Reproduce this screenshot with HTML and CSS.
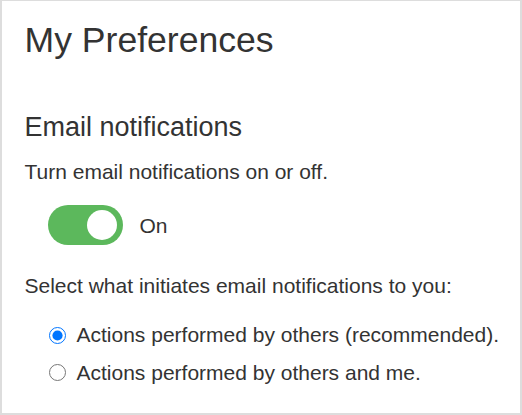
FILE: index.html
```html
<!DOCTYPE html>
<html lang="en">
<head>
<meta charset="utf-8">
<title>My Preferences</title>
<link rel="stylesheet" href="styles.css">
</head>
<body>
<div class="panel">
  <h1 class="title">My Preferences</h1>
  <h2 class="section-title">Email notifications</h2>
  <p class="text intro">Turn email notifications on or off.</p>
  <div class="toggle-row">
    <span class="toggle" role="switch" aria-checked="true"><span class="knob"></span></span>
    <span class="text toggle-label">On</span>
  </div>
  <p class="text prompt">Select what initiates email notifications to you:</p>
  <div class="options">
    <label class="option"><input class="radio" type="radio" name="init" checked><span class="text">Actions performed by others (recommended).</span></label>
    <label class="option"><input class="radio" type="radio" name="init"><span class="text">Actions performed by others and me.</span></label>
  </div>
</div>
</body>
</html>
```
FILE: styles.css
```css
html, body {
  margin: 0;
  padding: 0;
  background: #fff;
}
body {
  font-family: "Liberation Sans", Arial, sans-serif;
  color: #333;
}
.panel {
  box-sizing: border-box;
  width: 522px;
  height: 415px;
  border: 2px solid #ddd;
  border-top-width: 1px;
  padding: 18px 20px 0 22.5px;
  display: flex;
  flex-direction: column;
}
.title {
  margin: 0;
  font-size: 35.6px;
  line-height: 1.2;
  font-weight: normal;
}
.section-title {
  margin: 49px 0 0;
  font-size: 27px;
  line-height: 1.2;
  font-weight: normal;
}
.text {
  font-size: 21px;
  line-height: 1.2;
}
.intro {
  margin: 16px 0 0;
}
.toggle-row {
  margin: 20.5px 0 0 23px;
  display: flex;
  align-items: center;
  gap: 17px;
}
.toggle-label {
  padding-top: 2px;
}
.toggle {
  position: relative;
  width: 75px;
  height: 40px;
  border-radius: 20px;
  background: #5cb85c;
  display: block;
}
.knob {
  position: absolute;
  top: 5px;
  right: 6px;
  width: 30px;
  height: 30px;
  border-radius: 50%;
  background: #fff;
}
.prompt {
  margin: 28px 0 0;
}
.options {
  margin: 24.5px 0 0 24px;
  display: flex;
  flex-direction: column;
  gap: 12px;
}
.option {
  display: flex;
  align-items: center;
}
.radio {
  width: 17px;
  height: 17px;
  margin: 0 11px 0 0;
}
```
